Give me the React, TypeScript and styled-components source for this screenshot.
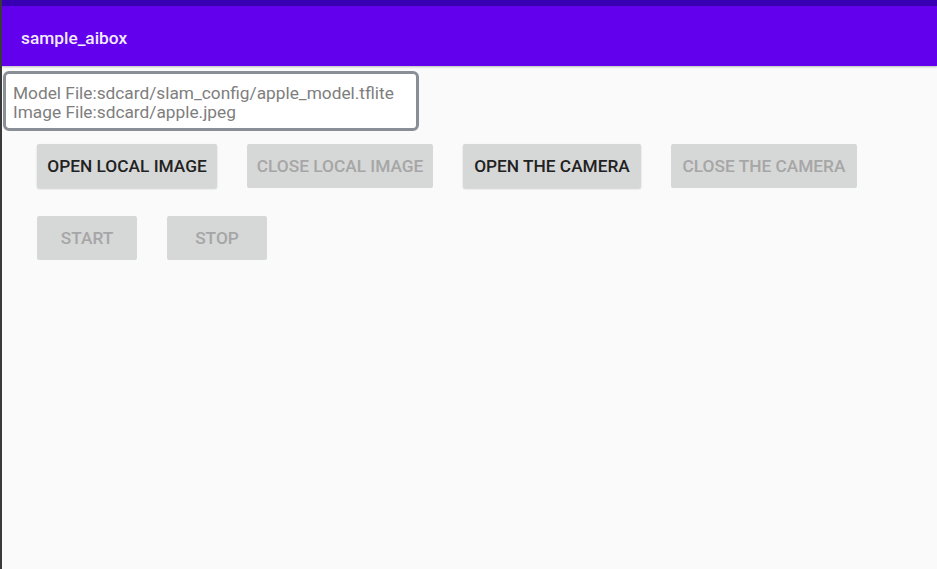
import React from "react";
import styled, { createGlobalStyle } from "styled-components";

const GlobalStyle = createGlobalStyle`
  html, body {
    margin: 0;
    padding: 0;
    background: #fafafa;
  }
  body {
    font-family: Roboto, "Noto Sans", "Liberation Sans", sans-serif;
  }
`;

const Screen = styled.div`
  width: 937px;
  height: 569px;
  background: #fafafa;
  border-left: 2px solid #3a3a3a;
  box-sizing: border-box;
  overflow: hidden;
  display: flex;
  flex-direction: column;
`;

const StatusBar = styled.div`
  height: 6px;
  background: #3700b3;
`;

const AppBar = styled.div`
  height: 60px;
  box-sizing: border-box;
  background: #6200ee;
  display: flex;
  align-items: center;
  padding: 3px 0 0 19px;
  color: #f3ecff;
  font-size: 17.3px;
  font-weight: 500;
  box-shadow: 0 1px 2px rgba(0, 0, 0, 0.25);
`;

const Content = styled.div`
  display: flex;
  flex-direction: column;
  padding: 5px 0 0 1px;
`;

const InfoBox = styled.div`
  width: 416px;
  box-sizing: border-box;
  border: 3px solid #8a8f97;
  border-radius: 6px;
  background: #ffffff;
  padding: 10px 7px 6px;
  color: #7e7e7e;
  font-size: 17.3px;
  line-height: 19px;
  white-space: nowrap;
`;

const ButtonRow = styled.div<{ $top: number }>`
  display: flex;
  gap: 30px;
  padding-left: 34px;
  margin-top: ${(p) => p.$top}px;
`;

const Button = styled.button<{ $disabled?: boolean; $width: number }>`
  width: ${(p) => p.$width}px;
  height: 44px;
  border: none;
  border-radius: 2px;
  background: #d6d7d7;
  color: ${(p) => (p.$disabled ? "#a6a6a6" : "#222222")};
  font-family: Roboto, "Noto Sans", "Liberation Sans", sans-serif;
  font-size: 17.3px;
  font-weight: 500;
  text-transform: uppercase;
  padding: 0;
  white-space: nowrap;
  box-shadow: ${(p) =>
    p.$disabled ? "none" : "0 1px 2px rgba(0, 0, 0, 0.18)"};
`;

export default function App() {
  return (
    <>
      <GlobalStyle />
      <Screen>
        <StatusBar />
        <AppBar>sample_aibox</AppBar>
        <Content>
          <InfoBox>
            Model File:sdcard/slam_config/apple_model.tflite
            <br />
            Image File:sdcard/apple.jpeg
          </InfoBox>
          <ButtonRow $top={13}>
            <Button $width={180}>Open local image</Button>
            <Button $width={186} $disabled>
              Close local image
            </Button>
            <Button $width={178}>Open the camera</Button>
            <Button $width={186} $disabled>
              Close the camera
            </Button>
          </ButtonRow>
          <ButtonRow $top={28}>
            <Button $width={100} $disabled>
              Start
            </Button>
            <Button $width={100} $disabled>
              Stop
            </Button>
          </ButtonRow>
        </Content>
      </Screen>
    </>
  );
}
